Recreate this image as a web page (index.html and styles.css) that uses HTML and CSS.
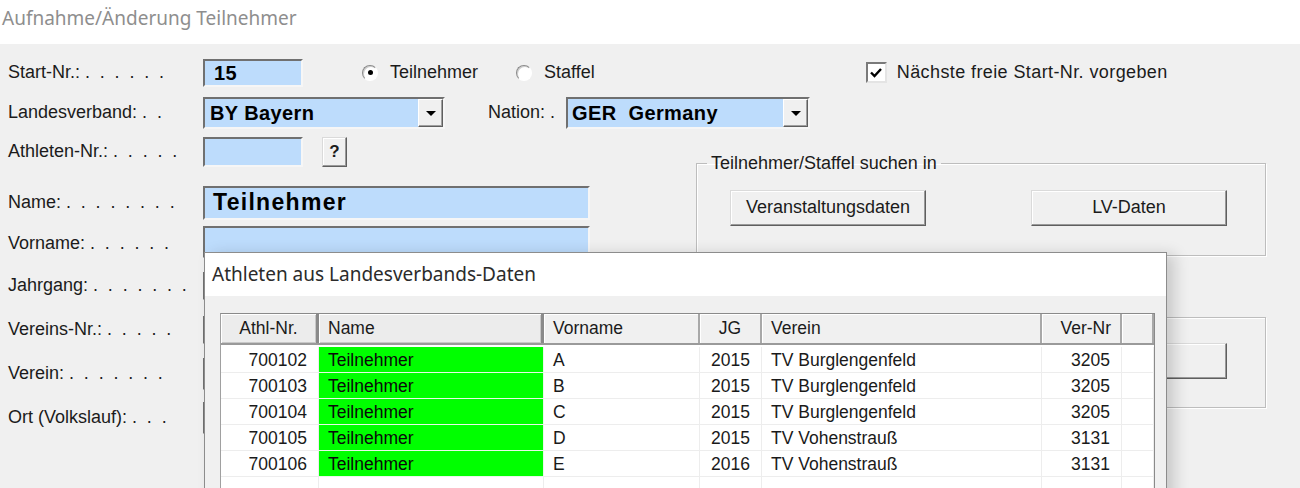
FILE: index.html
```html
<!DOCTYPE html>
<html lang="de">
<head>
    <meta charset="UTF-8">
    <title>Aufnahme/Änderung Teilnehmer</title>
    <link rel="stylesheet" href="styles.css">
</head>
<body>

<div class="caption">Aufnahme/Änderung Teilnehmer</div>

<div class="panel">
    <!-- Kopfzeilen -->
    <div class="row r1">
        <span class="lbl">Start-Nr.:<span class="dots">. . . . . .</span></span>
        <div class="field num">15</div>
        <label class="radio first"><span class="circle on"></span>Teilnehmer</label>
        <label class="radio"><span class="circle"></span>Staffel</label>
        <label class="check"><span class="box"><svg width="14" height="14" viewBox="0 0 14 14"><path d="M2 6.5 L5.5 10 L12 3" fill="none" stroke="#000" stroke-width="2.4"/></svg></span>Nächste freie Start-Nr. vorgeben</label>
    </div>
    <div class="row r2">
        <span class="lbl">Landesverband:<span class="dots">. .</span></span>
        <div class="field combo lv">BY Bayern<span class="drop"></span></div>
        <span class="lbl nation">Nation:<span class="dots">.</span></span>
        <div class="field combo nat">GER&nbsp; Germany<span class="drop"></span></div>
    </div>

    <div class="lower">
        <div class="left">
            <div class="frow fa">
                <span class="lbl">Athleten-Nr.:<span class="dots">. . . . .</span></span>
                <div class="field num tall"></div>
                <a class="btn q" href="#">?</a>
            </div>
            <div class="frow fn">
                <span class="lbl">Name:<span class="dots">. . . . . . . .</span></span>
                <div class="field wide big">Teilnehmer</div>
            </div>
            <div class="frow fv">
                <span class="lbl">Vorname:<span class="dots">. . . . . .</span></span>
                <div class="field wide"></div>
            </div>
            <div class="frow">
                <span class="lbl">Jahrgang:<span class="dots">. . . . . . .</span></span>
                <div class="field num"></div>
            </div>
            <div class="frow">
                <span class="lbl">Vereins-Nr.:<span class="dots">. . . . .</span></span>
                <div class="field num"></div>
            </div>
            <div class="frow">
                <span class="lbl">Verein:<span class="dots">. . . . . . .</span></span>
                <div class="field wide"></div>
            </div>
            <div class="frow">
                <span class="lbl">Ort (Volkslauf):<span class="dots">. . .</span></span>
                <div class="field wide"></div>
            </div>
        </div>

        <div class="right">
            <fieldset class="group">
                <legend>Teilnehmer/Staffel suchen in</legend>
                <div class="btnrow">
                    <a class="btn wbtn" href="#">Veranstaltungsdaten</a>
                    <a class="btn wbtn" href="#">LV-Daten</a>
                </div>
            </fieldset>
            <div class="group2">
                <div class="btnrow">
                    <a class="btn wbtn" href="#"></a>
                    <a class="btn wbtn" href="#"></a>
                </div>
            </div>
        </div>
    </div>
</div>

<!-- Auswahlfenster -->
<div class="popup">
    <div class="ptitle">Athleten aus Landesverbands-Daten</div>
    <div class="pbody">
        <div class="grid">
            <div class="grow head">
                <div class="hc hb c">Athl-Nr.</div>
                <div class="hc hb">Name</div>
                <div class="hc">Vorname</div>
                <div class="hc c">JG</div>
                <div class="hc">Verein</div>
                <div class="hc r">Ver-Nr</div>
                <div class="hc"></div>
            </div>
            <div class="rows">
                <div class="grow">
                    <div class="dc r">700102</div><div class="dc g">Teilnehmer</div><div class="dc">A</div><div class="dc c">2015</div><div class="dc">TV Burglengenfeld</div><div class="dc r">3205</div><div class="dc"></div>
                </div>
                <div class="grow">
                    <div class="dc r">700103</div><div class="dc g">Teilnehmer</div><div class="dc">B</div><div class="dc c">2015</div><div class="dc">TV Burglengenfeld</div><div class="dc r">3205</div><div class="dc"></div>
                </div>
                <div class="grow">
                    <div class="dc r">700104</div><div class="dc g">Teilnehmer</div><div class="dc">C</div><div class="dc c">2015</div><div class="dc">TV Burglengenfeld</div><div class="dc r">3205</div><div class="dc"></div>
                </div>
                <div class="grow">
                    <div class="dc r">700105</div><div class="dc g">Teilnehmer</div><div class="dc">D</div><div class="dc c">2015</div><div class="dc">TV Vohenstrauß</div><div class="dc r">3131</div><div class="dc"></div>
                </div>
                <div class="grow">
                    <div class="dc r">700106</div><div class="dc g">Teilnehmer</div><div class="dc">E</div><div class="dc c">2016</div><div class="dc">TV Vohenstrauß</div><div class="dc r">3131</div><div class="dc"></div>
                </div>
                <div class="grow">
                    <div class="dc"></div><div class="dc"></div><div class="dc"></div><div class="dc"></div><div class="dc"></div><div class="dc"></div><div class="dc"></div>
                </div>
            </div>
        </div>
    </div>
</div>

</body>
</html>
```

FILE: styles.css
```css
*{box-sizing:border-box}
body{margin:0;height:488px;overflow:hidden;position:relative;background:#fff;font:18px/1.2 "Liberation Sans", Arial, sans-serif;color:#1b1b1b}
a{text-decoration:none;color:inherit}

.caption{
    height:44px;
    padding:5px 0 0 2px;
    font:19px "Noto Sans", sans-serif;
    color:#8e8e8e;
}
.panel{
    background:#f0f0f0;
    height:444px;
    padding:8px 0 0 8px;
}
.row{display:flex;align-items:center}
.r1{height:41px}
.r2{height:40px}
.lbl{width:195px;flex:none;white-space:nowrap}
.dots{letter-spacing:2.4px;margin-left:5px}

/* Eingabefelder */
.field{
    display:flex;
    align-items:center;
    height:32px;
    padding:0 5px;
    background:#bddcfc;
    border:2px solid;
    border-color:#707070 #f6f6f6 #f6f6f6 #707070;
    font-weight:bold;
    font-size:20px;
    letter-spacing:.4px;
    color:#000;
}
.num{width:100px;height:28px;padding-left:9px}
.num.tall{height:30px}
.wide{width:387px}
.big{height:34px;font-size:23px;padding-left:8px;letter-spacing:1.3px}
.combo{padding:0 0 0 5px}
.lv{width:242px}
.nat{width:244px;padding-left:4px}
.drop{
    margin-left:auto;
    width:25px;
    height:28px;
    background:#f0f0f0;
    border:1px solid;
    border-color:#fff #5f5f5f #5f5f5f #fff;
    box-shadow:inset -1px -1px #a0a0a0;
    display:flex;
    align-items:center;
    justify-content:center;
}
.drop:after{
    content:"";
    border-top:5px solid #000;
    border-left:5px solid transparent;
    border-right:5px solid transparent;
}
.nation{width:78px;margin-left:43px}
.nation .dots{margin-left:5px}

/* Optionen */
.radio,.check{display:flex;align-items:center;white-space:nowrap}
.radio.first{margin-left:59px}
.radio{margin-left:38px}
.circle{
    width:16px;height:16px;
    border-radius:50%;
    background:#fff;
    border:1px solid;
    border-color:#8a8a8a #fff #fff #8a8a8a;
    box-shadow:inset 1px 1px #cfcfcf;
    margin-right:12px;
    display:flex;align-items:center;justify-content:center;
}
.circle.on:after{content:"";width:5px;height:5px;border-radius:50%;background:#000}
.check{margin-left:271px;letter-spacing:.4px}
.box{
    width:21px;height:21px;
    background:#fff;
    border:2px solid;
    border-color:#7a7a7a #e4e4e4 #e4e4e4 #7a7a7a;
    margin-right:10px;
    display:flex;align-items:center;justify-content:center;
}

/* unterer Bereich */
.lower{display:flex}
.left{width:688px;flex:none}
.frow{display:flex;align-items:center;height:32px;margin-top:12px}
.fa{margin-top:3px}
.fn{height:34px;margin-top:18px}
.fv{margin-top:6px}
.fv .lbl{padding-top:4px}

.btn{
    display:flex;align-items:center;justify-content:center;
    background:#f0f0f0;
    border:1px solid;
    border-color:#dadada #5f5f5f #5f5f5f #dadada;
    box-shadow:inset -1px -1px #9a9a9a, inset 1px 1px #fff;
    color:#1b1b1b;
}
.q{width:25px;height:30px;margin-left:19px;font-weight:bold;font-size:17px}

.right{width:570px;flex:none}
.group{
    margin:20px 0 0;
    padding:0 38px 29px 33px;
    border:1px solid #bdbdbd;
    box-shadow:inset 1px 1px #fff, 1px 1px #fff;
}
.group legend{padding:0 4px;margin-left:-23px;line-height:20px}
.btnrow{display:flex;justify-content:space-between}
.group .btnrow{margin-top:17px}
.wbtn{width:196px;height:36px}
.group2{
    margin-top:61px;
    height:91px;
    padding:25px 38px 0 33px;
    border:1px solid #bdbdbd;
    box-shadow:inset 1px 1px #fff, 1px 1px #fff;
}

/* Fenster mit Athletenliste */
.popup{
    position:absolute;
    left:204px;
    top:252px;
    width:963px;
    height:280px;
    background:#f0f0f0;
    border:1px solid #8c8c8c;
    box-shadow:8px 2px 14px rgba(0,0,0,.16);
}
.ptitle{
    height:43px;
    padding-left:7px;
    background:#fff;
    font:19px/43px "Noto Sans", sans-serif;
    color:#2b2b2b;
}
.pbody{padding:17px 0 0 15px}
.grid{
    width:935px;
    background:#fff;
    border:1px solid;
    border-color:#8a8a8a #8a8a8a #8a8a8a #a0a0a0;
    font-size:17.5px;
}
.grow{
    display:grid;
    grid-template-columns:98px 225px 156px 62px 280px 80px 32px;
}
.head{height:31px;background:#f0f0f0;border-bottom:2px solid #9a9a9a}
.hc{
    line-height:29px;
    padding:0 9px;
    border-right:2px solid #a8a8a8;
    box-shadow:inset 1px 1px #fff;
    white-space:nowrap;
}
.hb{
    border-right:3px solid #8a8a8a;
    box-shadow:inset 1px 1px #fff, inset -1px -1px #c8c8c8;
    background:#ececec;
}
.hc.r{text-align:right}
.c{text-align:center}
.rows{padding-top:2px}
.dc{
    height:26px;
    line-height:26px;
    padding:0 9px;
    border-right:1px solid #ededed;
    border-bottom:1px solid #ededed;
    color:#1a1a1a;
    white-space:nowrap;
}
.dc.r{text-align:right;padding-right:11px}
.dc.g{background:#00ff00;border-color:#e8f8e8;color:#0a0a0a}
```
